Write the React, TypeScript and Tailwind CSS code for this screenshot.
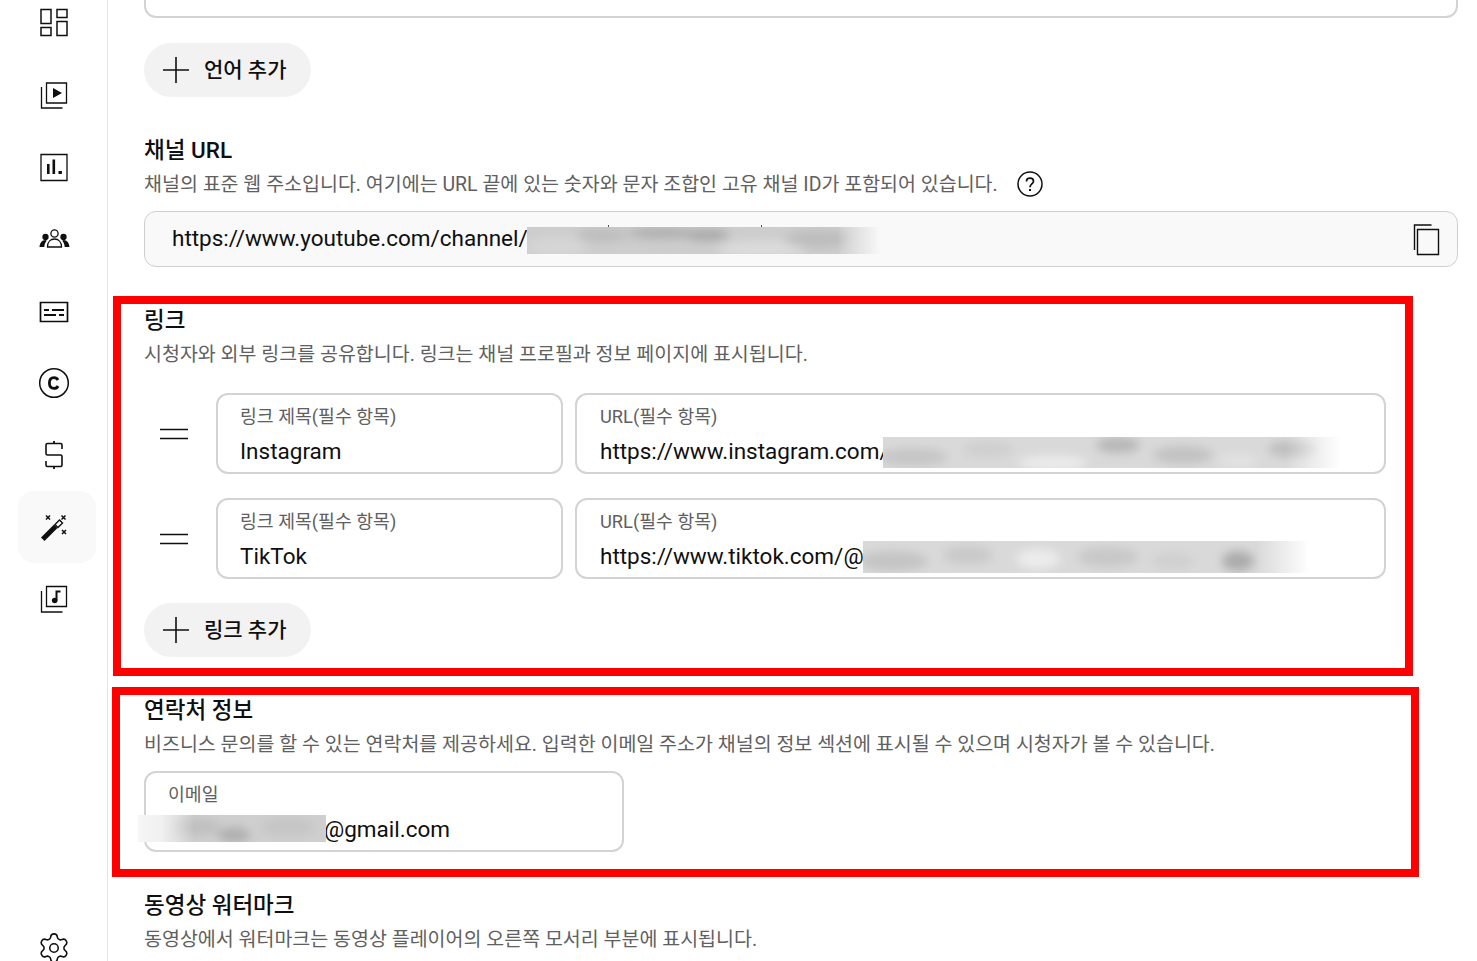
import React from 'react';
import { Settings } from 'lucide-react';

type Blob = [number, number, number, number, string];

const RailIcon: React.FC<{ active?: boolean; children: React.ReactNode }> = ({ active, children }) => (
  <div className={`w-[78px] h-[72px] shrink-0 flex items-center justify-center pr-[6px] rounded-2xl ${active ? 'bg-[#f9f9f9]' : ''}`}>
    <svg width="32" height="32" viewBox="0 0 32 32" fill="none" stroke="#0f0f0f" strokeWidth="1.3">
      {children}
    </svg>
  </div>
);

const Plus = () => (
  <svg width="28" height="28" viewBox="0 0 28 28" stroke="#0f0f0f" strokeWidth="1.6" fill="none">
    <path d="M1 14h26M14 1v26" />
  </svg>
);

const AddButton: React.FC<{ label: string }> = ({ label }) => (
  <button className="w-[167px] h-[54px] rounded-[27px] bg-[#f2f2f2] flex items-center pl-[18px] gap-[14px] text-[21px] font-medium text-[#0f0f0f]">
    <Plus />
    <span className="pt-[2px]">{label}</span>
  </button>
);

const Heading: React.FC<{ children: React.ReactNode }> = ({ children }) => (
  <h2 className="h-8 leading-[34px] text-[22.5px] font-medium text-[#0f0f0f]">{children}</h2>
);

const Sub: React.FC<{ children: React.ReactNode }> = ({ children }) => (
  <p className="mt-1 h-7 leading-8 text-[19.5px] text-[#606060] whitespace-nowrap">{children}</p>
);

// blurred-out part of a value; a drawing, not layout
const Smudge: React.FC<{
  id: string;
  w: number;
  h: number;
  className: string;
  base: string;
  fadeLeft?: boolean;
  blobs: Blob[];
}> = ({ id, w, h, className, base, fadeLeft, blobs }) => (
  <svg width={w} height={h} viewBox={`0 0 ${w} ${h}`} className={`absolute ${className}`}>
    <defs>
      <filter id={`${id}-b`} x="-30%" y="-80%" width="160%" height="260%">
        <feGaussianBlur stdDeviation="5" />
      </filter>
      <linearGradient id={`${id}-g`} x1="0" x2="1" y1="0" y2="0">
        <stop offset="0" stopColor="white" />
        <stop offset="0.88" stopColor="white" />
        <stop offset="1" stopColor="black" />
      </linearGradient>
      <linearGradient id={`${id}-f`} x1="0" x2="1" y1="0" y2="0">
        <stop offset="0" stopColor="#f6f6f6" />
        <stop offset="0.4" stopColor="#f1f1f1" />
        <stop offset="1" stopColor="#f1f1f1" stopOpacity="0" />
      </linearGradient>
      <mask id={`${id}-m`}>
        <rect width={w} height={h} fill={`url(#${id}-g)`} />
      </mask>
    </defs>
    <g mask={fadeLeft ? undefined : `url(#${id}-m)`}>
      <rect width={w} height={h} fill={base} />
      <g filter={`url(#${id}-b)`}>
        {blobs.map(([x, y, rx, ry, c], i) => (
          <ellipse key={i} cx={x} cy={y} rx={rx} ry={ry} fill={c} />
        ))}
      </g>
    </g>
    {fadeLeft && <rect width={w * 0.3} height={h} fill={`url(#${id}-f)`} />}
  </svg>
);

const Field: React.FC<{
  label: string;
  value?: string;
  className: string;
  children?: React.ReactNode;
}> = ({ label, value, className, children }) => (
  <div className={`relative h-[81px] rounded-xl border-2 border-[#d3d3d3] ${className}`}>
    <div className="mt-2 h-7 leading-7 text-[18.3px] text-[#606060] whitespace-nowrap">{label}</div>
    <div className="mt-1 h-8 leading-8 text-[22.5px] text-[#0f0f0f] whitespace-nowrap">{value}</div>
    {children}
  </div>
);

const Grip = () => (
  <div className="w-[72px] shrink-0 pl-[16px]">
    <svg width="28" height="12" viewBox="0 0 28 12" stroke="#0f0f0f" strokeWidth="1.3">
      <path d="M0 1.500h28M0 10.500h28" />
    </svg>
  </div>
);

export default function App() {
  return (
    <div className="relative w-[1477px] h-[961px] overflow-hidden bg-white flex font-['Roboto','Noto_Sans_CJK_KR',sans-serif]">
      <nav className="w-[108px] h-[974px] shrink-0 border-r border-[#e5e5e5] flex flex-col pl-[18px] -mt-[13px]">
        <RailIcon>
          <path d="M3 2.500h10v14H3zM19 2.500h10v8H19zM3 20.500h10v8H3zM19 14.500h10v14H19z" strokeWidth="1.500" />
        </RailIcon>
        <RailIcon>
          <path d="M8.500 4h20v20h-20z" />
          <path d="M3.500 8v21h21" />
          <path d="M15 9l9 5-9 5z" fill="#0f0f0f" stroke="none" />
        </RailIcon>
        <RailIcon>
          <path d="M3 3.500h26v26H3z" />
          <path d="M9 13h2.600v10H9zM14.500 8.500h2.600V23h-2.600zM20.500 20h3.400v3h-3.400z" fill="#0f0f0f" stroke="none" />
        </RailIcon>
        <RailIcon>
          <circle cx="16.500" cy="10.500" r="3.600" />
          <path d="M9.500 24c0-5 3-8 7-8s7 3 7 8z" />
          <circle cx="7.500" cy="14" r="2.500" fill="#0f0f0f" />
          <circle cx="25.500" cy="14" r="2.500" fill="#0f0f0f" />
          <path d="M1.500 24c.3-4 2.500-7 5.800-7l1.500.7c-1.500 1.600-2.400 3.600-2.500 6.300zM31.500 24c-.3-4-2.500-7-5.800-7l-1.500.7c1.500 1.600 2.400 3.600 2.500 6.300z" fill="#0f0f0f" stroke="none" />
        </RailIcon>
        <RailIcon>
          <path d="M2.500 7.500h27v19h-27z" strokeWidth="1.700" />
          <path d="M6 15h5M14 15h12M6 20h12M21 20h5" strokeWidth="2.200" />
        </RailIcon>
        <RailIcon>
          <circle cx="16" cy="16" r="14.300" strokeWidth="1.500" />
          <path d="M20 13c-.8-1.600-2.200-2.400-4-2.400-2.900 0-4.600 2.100-4.600 5.400s1.700 5.400 4.600 5.400c1.800 0 3.200-.8 4-2.400" strokeWidth="2.800" />
        </RailIcon>
        <RailIcon>
          <path d="M16 2v2.500M16 27.500V30" strokeWidth="1.800" />
          <path d="M24 10V6a1.500 1.500 0 0 0-1.500-1.500h-13A1.500 1.500 0 0 0 8 6v8.500A1.500 1.500 0 0 0 9.500 16h13a1.500 1.500 0 0 1 1.500 1.500V26a1.500 1.500 0 0 1-1.500 1.500h-13A1.500 1.500 0 0 1 8 26v-4" strokeWidth="1.600" />
        </RailIcon>
        <RailIcon active>
          <path d="M3 26.500l3.500 3.500 13-13-3.500-3.500z" fill="#0f0f0f" stroke="none" />
          <path d="M17 13.500l4.500-4.500 3 3-4.500 4.500z" fill="white" strokeWidth="1.400" />
          <path d="M8 4.500l4 4M12 4.500l-4 4M23.500 4.500l4 4M27.500 4.500l-4 4M24 19l4 4M28 19l-4 4" strokeWidth="1.500" />
        </RailIcon>
        <RailIcon>
          <path d="M8.500 3.500h20v20h-20z" />
          <path d="M3.500 8v21h21" />
          <circle cx="16.700" cy="17.500" r="2.800" fill="#0f0f0f" stroke="none" />
          <path d="M18.500 17.500V8.500h4" strokeWidth="2" />
        </RailIcon>
        <div className="mt-auto mb-[-4px] ml-[19px]">
          <Settings size={34} strokeWidth={1.1} color="#0f0f0f" />
        </div>
      </nav>

      <main className="flex-1 min-w-0 pl-9 pr-[19px]">
        <div className="h-[18px] rounded-b-xl border-2 border-t-0 border-[#d3d3d3]" />
        <div className="mt-[25px]">
          <AddButton label="언어 추가" />
        </div>

        <section className="mt-9">
          <Heading>채널 URL</Heading>
          <div className="flex items-center gap-[19px] mt-1 h-7">
            <p className="h-7 text-[19.5px] leading-8 text-[#606060] whitespace-nowrap">
              채널의 표준 웹 주소입니다. 여기에는 URL 끝에 있는 숫자와 문자 조합인 고유 채널 ID가 포함되어 있습니다.
            </p>
            <svg width="26" height="26" viewBox="0 0 26 26" fill="none" stroke="#0f0f0f" strokeWidth="1.500" className="translate-y-[1px]">
              <circle cx="13" cy="13" r="12" />
              <path d="M9.500 10.500c0-2 1.500-3.300 3.500-3.300s3.500 1.200 3.500 3c0 2.800-3.500 2.800-3.500 6" strokeWidth="1.700" />
              <path d="M13 18v2" strokeWidth="2" />
            </svg>
          </div>
          <div className="relative mt-[14px] h-14 rounded-xl border border-[#cfcfcf] bg-[#f9f9f9] pl-[27px] flex items-center text-[22.5px] text-[#0f0f0f]">
            <span>https://www.youtube.com/channel/</span>
            <span className="absolute left-[463px] top-[13px] w-[1px] h-[2px] bg-[#555555]" />
            <span className="absolute left-[616px] top-[13px] w-[1px] h-[2px] bg-[#555555]" />
            <Smudge
              id="s1"
              w={353}
              h={27}
              className="left-[382px] top-[15px]"
              base="#cdcdcd"
              blobs={[
                [30, 20, 30, 10, '#d6d6d6'],
                [75, 8, 25, 7, '#bdbdbd'],
                [135, 6, 35, 6, '#b0b0b0'],
                [180, 8, 22, 6, '#a9a9a9'],
                [235, 22, 45, 8, '#dcdcdc'],
                [290, 12, 32, 9, '#bdbdbd'],
              ]}
            />
            <svg width="28" height="34" viewBox="0 0 28 34" fill="none" stroke="#0f0f0f" strokeWidth="1.400" className="absolute right-[16px] top-[11px]">
              <path d="M1.500 27V2h17" />
              <path d="M4.500 6.500h21v25h-21z" />
            </svg>
          </div>
        </section>

        <section className="mt-9">
          <Heading>링크</Heading>
          <Sub>시청자와 외부 링크를 공유합니다. 링크는 채널 프로필과 정보 페이지에 표시됩니다.</Sub>
          <div className="mt-[26px] flex flex-col gap-6">
            <div className="flex items-center">
              <Grip />
              <Field label="링크 제목(필수 항목)" value="Instagram" className="w-[347px] pl-[22px]" />
              <Field label="URL(필수 항목)" value="https://www.instagram.com/" className="w-[811px] ml-3 pl-[23px]">
                <Smudge
                  id="s2"
                  w={457}
                  h={31}
                  className="left-[306px] top-[42px]"
                  base="#d9d9d9"
                  blobs={[
                    [30, 20, 35, 9, '#c6c6c6'],
                    [105, 12, 25, 8, '#cfcfcf'],
                    [170, 26, 35, 7, '#ececec'],
                    [235, 8, 22, 8, '#b8b8b8'],
                    [300, 18, 30, 9, '#c2c2c2'],
                    [355, 24, 20, 7, '#e2e2e2'],
                    [410, 12, 25, 8, '#bebebe'],
                  ]}
                />
              </Field>
            </div>
            <div className="flex items-center">
              <Grip />
              <Field label="링크 제목(필수 항목)" value="TikTok" className="w-[347px] pl-[22px]" />
              <Field label="URL(필수 항목)" value="https://www.tiktok.com/@" className="w-[811px] ml-3 pl-[23px]">
                <Smudge
                  id="s3"
                  w={447}
                  h={32}
                  className="left-[286px] top-[41px]"
                  base="#d9d9d9"
                  blobs={[
                    [30, 20, 35, 10, '#c4c4c4'],
                    [105, 14, 25, 9, '#c9c9c9'],
                    [175, 18, 22, 10, '#ececec'],
                    [245, 16, 30, 10, '#c8c8c8'],
                    [310, 20, 22, 8, '#d0d0d0'],
                    [375, 20, 16, 10, '#acacac'],
                  ]}
                />
              </Field>
            </div>
          </div>
          <div className="mt-6">
            <AddButton label="링크 추가" />
          </div>
        </section>

        <section className="mt-9">
          <Heading>연락처 정보</Heading>
          <Sub>
            비즈니스 문의를 할 수 있는 연락처를 제공하세요. 입력한 이메일 주소가 채널의 정보 섹션에 표시될 수 있으며 시청자가 볼 수 있습니다.
          </Sub>
          <Field label="이메일" className="mt-[14px] w-[480px] pl-[22px]">
            <div className="absolute left-[178px] top-[40px] h-8 leading-8 text-[22.5px] text-[#0f0f0f]">@gmail.com</div>
            <Smudge
              id="s4"
              w={188}
              h={27}
              className="-left-[8px] top-[42px]"
              base="#cfcfcf"
              fadeLeft
              blobs={[
                [58, 12, 25, 9, '#c0c0c0'],
                [96, 20, 16, 8, '#b0b0b0'],
                [150, 12, 28, 10, '#c6c6c6'],
              ]}
            />
          </Field>
        </section>

        <section className="mt-9">
          <Heading>동영상 워터마크</Heading>
          <Sub>동영상에서 워터마크는 동영상 플레이어의 오른쪽 모서리 부분에 표시됩니다.</Sub>
        </section>
      </main>

      {/* red markup rectangles drawn on top of the capture */}
      <div className="absolute left-[113px] top-[296px] w-[1300px] h-[380px] border-8 border-[#ff0000] pointer-events-none" />
      <div className="absolute left-[112px] top-[687px] w-[1307px] h-[190px] border-8 border-[#ff0000] pointer-events-none" />
    </div>
  );
}
